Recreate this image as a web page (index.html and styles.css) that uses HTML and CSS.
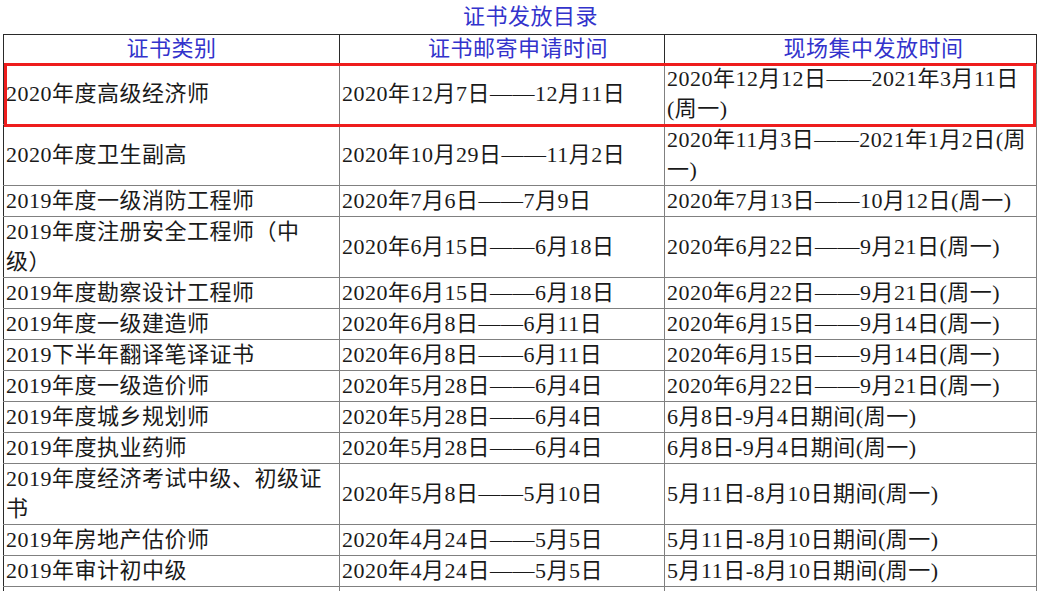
FILE: index.html
```html
<!DOCTYPE html>
<html lang="zh-CN">
<head>
<meta charset="utf-8">
<title>证书发放目录</title>
<link rel="stylesheet" href="styles.css">
</head>
<body>
<div class="title">证书发放目录</div>
<div class="wrap">
  <table class="list">
    <colgroup>
      <col class="c1">
      <col class="c2">
      <col class="c3">
    </colgroup>
    <thead>
      <tr>
        <th class="h1">证书类别</th>
        <th class="h2">证书邮寄申请时间</th>
        <th class="h3">现场集中发放时间</th>
      </tr>
    </thead>
    <tbody>
      <tr><td>2020年度高级经济师</td><td>2020年12月7日——12月11日</td><td>2020年12月12日——2021年3月11日(周一)</td></tr>
      <tr><td>2020年度卫生副高</td><td>2020年10月29日——11月2日</td><td>2020年11月3日——2021年1月2日(周一)</td></tr>
      <tr><td>2019年度一级消防工程师</td><td>2020年7月6日——7月9日</td><td>2020年7月13日——10月12日(周一)</td></tr>
      <tr><td>2019年度注册安全工程师（中级）</td><td>2020年6月15日——6月18日</td><td>2020年6月22日——9月21日(周一)</td></tr>
      <tr><td>2019年度勘察设计工程师</td><td>2020年6月15日——6月18日</td><td>2020年6月22日——9月21日(周一)</td></tr>
      <tr><td>2019年度一级建造师</td><td>2020年6月8日——6月11日</td><td>2020年6月15日——9月14日(周一)</td></tr>
      <tr><td>2019下半年翻译笔译证书</td><td>2020年6月8日——6月11日</td><td>2020年6月15日——9月14日(周一)</td></tr>
      <tr><td>2019年度一级造价师</td><td>2020年5月28日——6月4日</td><td>2020年6月22日——9月21日(周一)</td></tr>
      <tr><td>2019年度城乡规划师</td><td>2020年5月28日——6月4日</td><td>6月8日-9月4日期间(周一)</td></tr>
      <tr><td>2019年度执业药师</td><td>2020年5月28日——6月4日</td><td>6月8日-9月4日期间(周一)</td></tr>
      <tr><td>2019年度经济考试中级、初级证书</td><td>2020年5月8日——5月10日</td><td>5月11日-8月10日期间(周一)</td></tr>
      <tr><td>2019年房地产估价师</td><td>2020年4月24日——5月5日</td><td>5月11日-8月10日期间(周一)</td></tr>
      <tr><td>2019年审计初中级</td><td>2020年4月24日——5月5日</td><td>5月11日-8月10日期间(周一)</td></tr>
      <tr><td>&nbsp;</td><td>&nbsp;</td><td>&nbsp;</td></tr>
    </tbody>
  </table>
  <div class="highlight"></div>
</div>
</body>
</html>
```

FILE: styles.css
```css
html, body {
  margin: 0;
  padding: 0;
  background: #ffffff;
}

body {
  font-family: "Liberation Serif", "Noto Sans CJK SC", serif;
  font-size: 22px;
  letter-spacing: 0.5px;
  color: #1a1a1a;
  overflow: hidden;
}

.title {
  width: 1033px;
  margin-left: 3px;
  height: 34px;
  line-height: 34px;
  text-align: center;
  padding-left: 22px;
  box-sizing: border-box;
  color: #3333cc;
}

.wrap {
  position: relative;
  margin-left: 3px;
  width: 1033px;
}

.list {
  table-layout: fixed;
  border-collapse: collapse;
  width: 1033px;
}

.c1 { width: 336px; }
.c2 { width: 325px; }
.c3 { width: 372px; }

.list th {
  font-weight: normal;
  color: #3333cc;
  line-height: 28px;
  padding: 0;
  text-align: center;
  border: 1px solid #2a2a2a;
}

.list th.h2 { padding-left: 32px; }
.list th.h3 { padding-left: 46px; }

.list td {
  line-height: 30px;
  padding: 0 6px 0 2px;
  text-align: left;
  vertical-align: middle;
  border: 1px solid #808080;
}

.list td:first-child {
  border-left-color: #2a2a2a;
}

.highlight {
  position: absolute;
  left: 1px;
  top: 29px;
  width: 1032px;
  height: 64px;
  box-sizing: border-box;
  border: 3px solid #ee1d1d;
  pointer-events: none;
}
```
